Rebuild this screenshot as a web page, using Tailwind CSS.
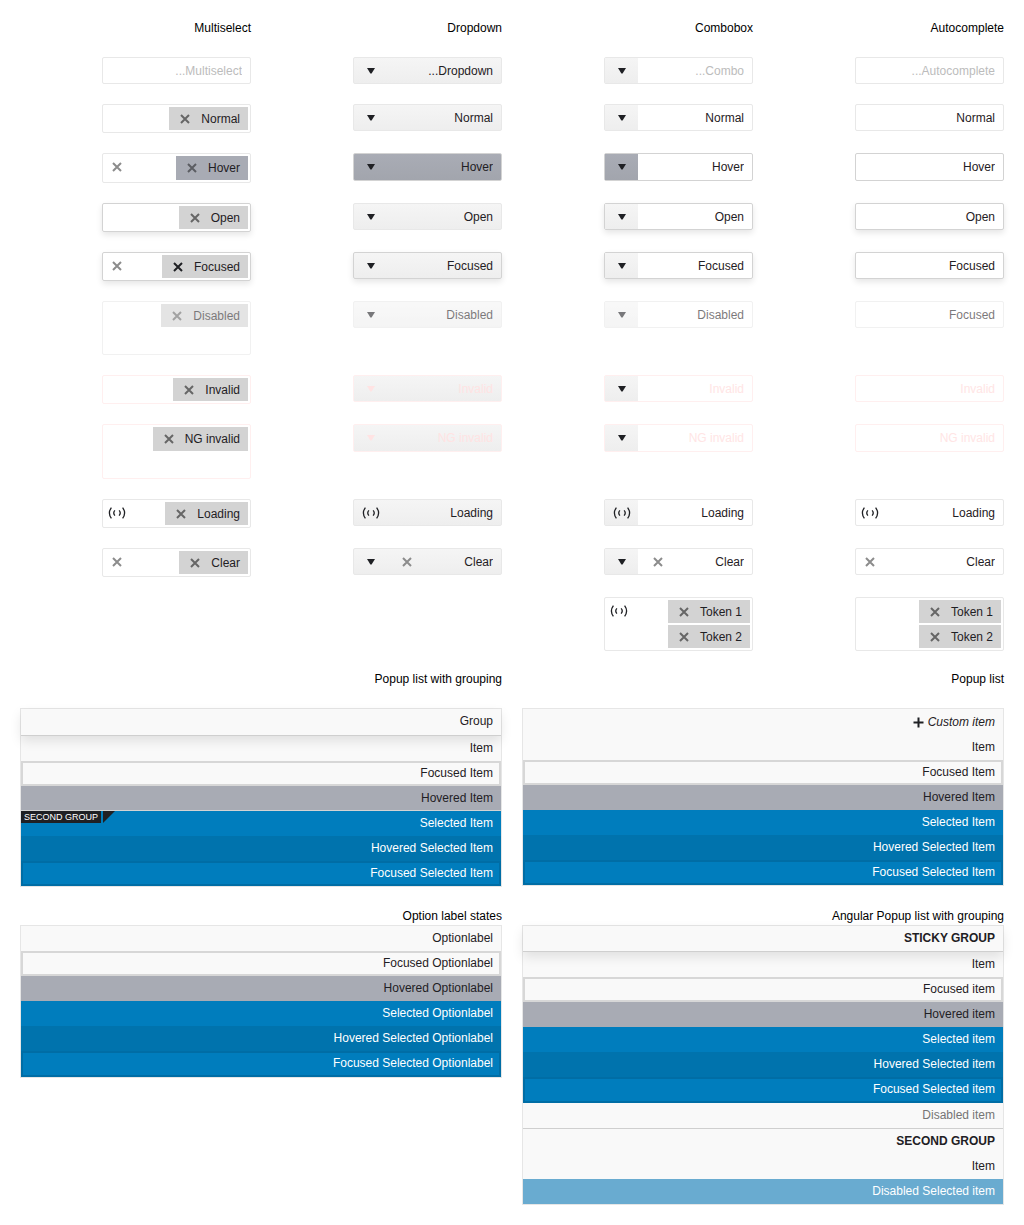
<!DOCTYPE html>
<html lang="en" dir="rtl">
<head>
<meta charset="utf-8">
<title>Select controls, right to left</title>
<script src="https://cdn.jsdelivr.net/npm/@tailwindcss/browser@4"></script>
</head>
<body class="bg-white p-5 font-['Liberation_Sans',Arial,sans-serif] text-xs text-[#1f2024]">

<svg class="hidden" aria-hidden="true">
  <symbol id="x" viewBox="0 0 10 10"><path d="M1 1l8 8M9 1l-8 8" fill="none" stroke="currentColor" stroke-width="2"/></symbol>
  <symbol id="arrow" viewBox="0 0 8 6"><path d="M0 0h8L4.6 5.6h-1.2z" fill="currentColor"/></symbol>
  <symbol id="load" viewBox="0 0 18 12"><path d="M3.4 .6Q-.6 6 3.4 11.4M14.6 .6Q18.6 6 14.6 11.4M6.9 3.4Q4.6 6 6.9 8.6M11.1 3.4Q13.4 6 11.1 8.6" fill="none" stroke="currentColor" stroke-width="1.3"/></symbol>
  <symbol id="plus" viewBox="0 0 11 11"><path d="M5.5 .5v10M.5 5.5h10" fill="none" stroke="currentColor" stroke-width="2"/></symbol>
</svg>

<main>
<section class="grid grid-cols-4 items-start gap-5">
  <h2 class="h-[17px] leading-[17px] text-black">Autocomplete</h2>
  <h2 class="h-[17px] leading-[17px] text-black">Combobox</h2>
  <h2 class="h-[17px] leading-[17px] text-black">Dropdown</h2>
  <h2 class="h-[17px] leading-[17px] text-black">Multiselect</h2>

  <!-- Placeholder -->
  <input aria-label="Autocomplete placeholder" placeholder="Autocomplete..." class="h-[27px] w-full max-w-[149px] rounded-xs border border-[#e8e8e8] bg-white px-2 placeholder:text-[#bcbcbc]">
  <div class="flex h-[27px] w-full max-w-[149px] rounded-xs border border-[#e8e8e8]">
    <input aria-label="Combobox placeholder" placeholder="Combo..." class="w-0 flex-1 px-2 placeholder:text-[#bcbcbc]">
    <button aria-label="Open" class="flex w-[33px] items-center justify-center bg-linear-to-b from-[#f5f5f5] to-[#eeeeee]"><svg class="h-[6px] w-2"><use href="#arrow"/></svg></button>
  </div>
  <div class="relative w-full max-w-[149px]">
    <select aria-label="Dropdown placeholder" class="block h-[27px] w-full appearance-none rounded-xs border border-[#e8e8e8] bg-linear-to-b from-[#f5f5f5] to-[#eeeeee] px-2"><option>Dropdown...</option></select>
    <span class="pointer-events-none absolute inset-y-0 left-0 flex w-[35px] items-center justify-center"><svg class="h-[6px] w-2"><use href="#arrow"/></svg></span>
  </div>
  <input aria-label="Multiselect placeholder" placeholder="Multiselect..." class="h-[27px] w-full max-w-[149px] rounded-xs border border-[#e8e8e8] bg-white px-2 placeholder:text-[#bcbcbc]">

  <!-- Normal -->
  <input aria-label="Autocomplete normal" value="Normal" class="h-[27px] w-full max-w-[149px] rounded-xs border border-[#e8e8e8] bg-white px-2">
  <div class="flex h-[27px] w-full max-w-[149px] rounded-xs border border-[#e8e8e8]">
    <input aria-label="Combobox normal" value="Normal" class="w-0 flex-1 px-2">
    <button aria-label="Open" class="flex w-[33px] items-center justify-center bg-linear-to-b from-[#f5f5f5] to-[#eeeeee]"><svg class="h-[6px] w-2"><use href="#arrow"/></svg></button>
  </div>
  <div class="relative w-full max-w-[149px]">
    <select aria-label="Dropdown normal" class="block h-[27px] w-full appearance-none rounded-xs border border-[#e8e8e8] bg-linear-to-b from-[#f5f5f5] to-[#eeeeee] px-2"><option>Normal</option></select>
    <span class="pointer-events-none absolute inset-y-0 left-0 flex w-[35px] items-center justify-center"><svg class="h-[6px] w-2"><use href="#arrow"/></svg></span>
  </div>
  <div class="flex w-full max-w-[149px] rounded-xs border border-[#e8e8e8] p-[2px]">
    <span class="flex h-[23px] items-center bg-[#d3d3d3] pr-2">Normal<button aria-label="Remove Normal" class="flex w-8 justify-center text-[#666]"><svg class="size-[10px]"><use href="#x"/></svg></button></span>
    <input aria-label="Multiselect normal" class="w-0 flex-1">
  </div>

  <!-- Hover -->
  <input aria-label="Autocomplete hover" value="Hover" class="h-[28px] w-full max-w-[149px] rounded-xs border border-[#d3d3d3] bg-white px-2">
  <div class="flex h-[28px] w-full max-w-[149px] rounded-xs border border-[#d3d3d3]">
    <input aria-label="Combobox hover" value="Hover" class="w-0 flex-1 px-2">
    <button aria-label="Open" class="flex w-[33px] items-center justify-center bg-linear-to-b from-[#a9acb5] to-[#a2a5ad]"><svg class="h-[6px] w-2"><use href="#arrow"/></svg></button>
  </div>
  <div class="relative w-full max-w-[149px]">
    <select aria-label="Dropdown hover" class="block h-[28px] w-full appearance-none rounded-xs border border-[#d3d3d3] bg-linear-to-b from-[#a9acb5] to-[#a2a5ad] px-2"><option>Hover</option></select>
    <span class="pointer-events-none absolute inset-y-0 left-0 flex w-[35px] items-center justify-center"><svg class="h-[6px] w-2"><use href="#arrow"/></svg></span>
  </div>
  <div class="flex w-full max-w-[149px] rounded-xs border border-[#e8e8e8]">
    <div class="flex flex-1 p-[2px] pl-0">
      <span class="flex h-[24px] items-center bg-[#a8abb4] pr-2">Hover<button aria-label="Remove Hover" class="flex w-8 justify-center text-[#5b5d62]"><svg class="size-[10px]"><use href="#x"/></svg></button></span>
      <input aria-label="Multiselect hover" class="w-0 flex-1">
    </div>
    <button aria-label="Clear" class="flex h-[26px] w-7 items-center justify-center text-[#8c8c8c]"><svg class="size-[10px]"><use href="#x"/></svg></button>
  </div>

  <!-- Open -->
  <input aria-label="Autocomplete open" value="Open" class="h-[27px] w-full max-w-[149px] rounded-xs border border-[#d3d3d3] bg-white px-2 shadow-[0_3px_6px_rgba(0,0,0,0.1)]">
  <div class="flex h-[27px] w-full max-w-[149px] rounded-xs border border-[#d3d3d3] shadow-[0_3px_6px_rgba(0,0,0,0.1)]">
    <input aria-label="Combobox open" value="Open" class="w-0 flex-1 px-2">
    <button aria-label="Close" class="flex w-[33px] items-center justify-center bg-linear-to-b from-[#f5f5f5] to-[#eeeeee]"><svg class="h-[6px] w-2"><use href="#arrow"/></svg></button>
  </div>
  <div class="relative w-full max-w-[149px]">
    <select aria-label="Dropdown open" class="block h-[27px] w-full appearance-none rounded-xs border border-[#e8e8e8] bg-linear-to-b from-[#f5f5f5] to-[#eeeeee] px-2"><option>Open</option></select>
    <span class="pointer-events-none absolute inset-y-0 left-0 flex w-[35px] items-center justify-center"><svg class="h-[6px] w-2"><use href="#arrow"/></svg></span>
  </div>
  <div class="flex w-full max-w-[149px] rounded-xs border border-[#d3d3d3] p-[2px] shadow-[0_3px_6px_rgba(0,0,0,0.1)]">
    <span class="flex h-[23px] items-center bg-[#d3d3d3] pr-2">Open<button aria-label="Remove Open" class="flex w-8 justify-center text-[#666]"><svg class="size-[10px]"><use href="#x"/></svg></button></span>
    <input aria-label="Multiselect open" class="w-0 flex-1">
  </div>

  <!-- Focused -->
  <input aria-label="Autocomplete focused" value="Focused" class="h-[27px] w-full max-w-[149px] rounded-xs border border-[#d3d3d3] bg-white px-2 shadow-[0_3px_6px_rgba(0,0,0,0.1)]">
  <div class="flex h-[27px] w-full max-w-[149px] rounded-xs border border-[#d3d3d3] shadow-[0_3px_6px_rgba(0,0,0,0.1)]">
    <input aria-label="Combobox focused" value="Focused" class="w-0 flex-1 px-2">
    <button aria-label="Open" class="flex w-[33px] items-center justify-center bg-linear-to-b from-[#f5f5f5] to-[#eeeeee]"><svg class="h-[6px] w-2"><use href="#arrow"/></svg></button>
  </div>
  <div class="relative w-full max-w-[149px]">
    <select aria-label="Dropdown focused" class="block h-[27px] w-full appearance-none rounded-xs border border-[#d3d3d3] bg-linear-to-b from-[#f5f5f5] to-[#eeeeee] px-2 shadow-[0_3px_6px_rgba(0,0,0,0.1)]"><option>Focused</option></select>
    <span class="pointer-events-none absolute inset-y-0 left-0 flex w-[35px] items-center justify-center"><svg class="h-[6px] w-2"><use href="#arrow"/></svg></span>
  </div>
  <div class="flex w-full max-w-[149px] rounded-xs border border-[#d3d3d3] shadow-[0_3px_6px_rgba(0,0,0,0.1)]">
    <div class="flex flex-1 p-[2px] pl-0">
      <span class="flex h-[23px] items-center bg-[#d3d3d3] pr-2">Focused<button aria-label="Remove Focused" class="flex w-8 justify-center"><svg class="size-[10px]"><use href="#x"/></svg></button></span>
      <input aria-label="Multiselect focused" class="w-0 flex-1">
    </div>
    <button aria-label="Clear" class="flex h-[25px] w-7 items-center justify-center text-[#8c8c8c]"><svg class="size-[10px]"><use href="#x"/></svg></button>
  </div>

  <!-- Disabled -->
  <input disabled aria-label="Autocomplete disabled" value="Focused" class="h-[27px] w-full max-w-[149px] rounded-xs border border-[#e8e8e8] bg-white px-2 opacity-60">
  <div class="flex h-[27px] w-full max-w-[149px] rounded-xs border border-[#e8e8e8] opacity-60">
    <input disabled aria-label="Combobox disabled" value="Disabled" class="w-0 flex-1 px-2">
    <button disabled aria-label="Open" class="flex w-[33px] items-center justify-center bg-linear-to-b from-[#f5f5f5] to-[#eeeeee]"><svg class="h-[6px] w-2"><use href="#arrow"/></svg></button>
  </div>
  <div class="relative w-full max-w-[149px] opacity-60">
    <select disabled aria-label="Dropdown disabled" class="block h-[27px] w-full appearance-none rounded-xs border border-[#e8e8e8] bg-linear-to-b from-[#f5f5f5] to-[#eeeeee] px-2 opacity-100"><option>Disabled</option></select>
    <span class="pointer-events-none absolute inset-y-0 left-0 flex w-[35px] items-center justify-center"><svg class="h-[6px] w-2"><use href="#arrow"/></svg></span>
  </div>
  <div class="flex h-[54px] w-full max-w-[149px] items-start rounded-xs border border-[#e8e8e8] p-[2px] opacity-60">
    <span class="flex h-[23px] items-center bg-[#d3d3d3] pr-2">Disabled<button disabled aria-label="Remove Disabled" class="flex w-8 justify-center text-[#666]"><svg class="size-[10px]"><use href="#x"/></svg></button></span>
    <input disabled aria-label="Multiselect disabled" class="w-0 flex-1">
  </div>

  <!-- Invalid -->
  <input aria-invalid="true" aria-label="Autocomplete invalid" value="Invalid" class="h-[27px] w-full max-w-[149px] rounded-xs border border-[#ffefef] bg-white px-2 text-[#ffe5e5]">
  <div class="flex h-[27px] w-full max-w-[149px] rounded-xs border border-[#ffefef]">
    <input aria-invalid="true" aria-label="Combobox invalid" value="Invalid" class="w-0 flex-1 px-2 text-[#ffe5e5]">
    <button aria-label="Open" class="flex w-[33px] items-center justify-center bg-linear-to-b from-[#f5f5f5] to-[#eeeeee]"><svg class="h-[6px] w-2"><use href="#arrow"/></svg></button>
  </div>
  <div class="relative w-full max-w-[149px] text-[#ffe3e3]">
    <select aria-invalid="true" aria-label="Dropdown invalid" class="block h-[27px] w-full appearance-none rounded-xs border border-[#ffefef] bg-linear-to-b from-[#f5f5f5] to-[#eeeeee] px-2"><option>Invalid</option></select>
    <span class="pointer-events-none absolute inset-y-0 left-0 flex w-[35px] items-center justify-center"><svg class="h-[6px] w-2"><use href="#arrow"/></svg></span>
  </div>
  <div class="flex w-full max-w-[149px] rounded-xs border border-[#ffefef] p-[2px]">
    <span class="flex h-[23px] items-center bg-[#d3d3d3] pr-2">Invalid<button aria-label="Remove Invalid" class="flex w-8 justify-center text-[#666]"><svg class="size-[10px]"><use href="#x"/></svg></button></span>
    <input aria-invalid="true" aria-label="Multiselect invalid" class="w-0 flex-1">
  </div>

  <!-- NG invalid -->
  <input aria-invalid="true" aria-label="Autocomplete NG invalid" value="NG invalid" class="h-[28px] w-full max-w-[149px] rounded-xs border border-[#ffefef] bg-white px-2 text-[#ffe5e5]">
  <div class="flex h-[28px] w-full max-w-[149px] rounded-xs border border-[#ffefef]">
    <input aria-invalid="true" aria-label="Combobox NG invalid" value="NG invalid" class="w-0 flex-1 px-2 text-[#ffe5e5]">
    <button aria-label="Open" class="flex w-[33px] items-center justify-center bg-linear-to-b from-[#f5f5f5] to-[#eeeeee]"><svg class="h-[6px] w-2"><use href="#arrow"/></svg></button>
  </div>
  <div class="relative w-full max-w-[149px] text-[#ffe3e3]">
    <select aria-invalid="true" aria-label="Dropdown NG invalid" class="block h-[28px] w-full appearance-none rounded-xs border border-[#ffefef] bg-linear-to-b from-[#f5f5f5] to-[#eeeeee] px-2"><option>NG invalid</option></select>
    <span class="pointer-events-none absolute inset-y-0 left-0 flex w-[35px] items-center justify-center"><svg class="h-[6px] w-2"><use href="#arrow"/></svg></span>
  </div>
  <div class="flex h-[55px] w-full max-w-[149px] items-start rounded-xs border border-[#ffefef] p-[2px]">
    <span class="flex h-[24px] items-center bg-[#d3d3d3] pr-2">NG invalid<button aria-label="Remove NG invalid" class="flex w-8 justify-center text-[#666]"><svg class="size-[10px]"><use href="#x"/></svg></button></span>
    <input aria-invalid="true" aria-label="Multiselect NG invalid" class="w-0 flex-1">
  </div>

  <!-- Loading -->
  <div class="flex h-[27px] w-full max-w-[149px] rounded-xs border border-[#e8e8e8]">
    <input aria-label="Autocomplete loading" value="Loading" class="w-0 flex-1 pr-2">
    <span class="flex w-7 items-center justify-center"><svg class="h-3 w-[18px]"><use href="#load"/></svg></span>
  </div>
  <div class="flex h-[27px] w-full max-w-[149px] rounded-xs border border-[#e8e8e8]">
    <input aria-label="Combobox loading" value="Loading" class="w-0 flex-1 px-2">
    <button aria-label="Loading" class="flex w-[33px] items-center justify-center bg-linear-to-b from-[#f5f5f5] to-[#eeeeee]"><svg class="h-3 w-[18px]"><use href="#load"/></svg></button>
  </div>
  <div class="relative w-full max-w-[149px]">
    <select aria-label="Dropdown loading" class="block h-[27px] w-full appearance-none rounded-xs border border-[#e8e8e8] bg-linear-to-b from-[#f5f5f5] to-[#eeeeee] px-2"><option>Loading</option></select>
    <span class="pointer-events-none absolute inset-y-0 left-0 flex w-[35px] items-center justify-center"><svg class="h-3 w-[18px]"><use href="#load"/></svg></span>
  </div>
  <div class="flex w-full max-w-[149px] rounded-xs border border-[#e8e8e8]">
    <div class="flex flex-1 p-[2px] pl-0">
      <span class="flex h-[23px] items-center bg-[#d3d3d3] pr-2">Loading<button aria-label="Remove Loading" class="flex w-8 justify-center text-[#666]"><svg class="size-[10px]"><use href="#x"/></svg></button></span>
      <input aria-label="Multiselect loading" class="w-0 flex-1">
    </div>
    <span class="flex h-[25px] w-7 items-center justify-center"><svg class="h-3 w-[18px]"><use href="#load"/></svg></span>
  </div>

  <!-- Clear -->
  <div class="flex h-[27px] w-full max-w-[149px] rounded-xs border border-[#e8e8e8]">
    <input aria-label="Autocomplete with clear button" value="Clear" class="w-0 flex-1 pr-2">
    <button aria-label="Clear" class="flex w-7 items-center justify-center text-[#8c8c8c]"><svg class="size-[10px]"><use href="#x"/></svg></button>
  </div>
  <div class="flex h-[27px] w-full max-w-[149px] rounded-xs border border-[#e8e8e8]">
    <input aria-label="Combobox with clear button" value="Clear" class="w-0 flex-1 pr-2">
    <button aria-label="Clear" class="flex w-10 items-center justify-center text-[#8c8c8c]"><svg class="size-[10px]"><use href="#x"/></svg></button>
    <button aria-label="Open" class="flex w-[33px] items-center justify-center bg-linear-to-b from-[#f5f5f5] to-[#eeeeee]"><svg class="h-[6px] w-2"><use href="#arrow"/></svg></button>
  </div>
  <div class="relative w-full max-w-[149px]">
    <select aria-label="Dropdown with clear button" class="block h-[27px] w-full appearance-none rounded-xs border border-[#e8e8e8] bg-linear-to-b from-[#f5f5f5] to-[#eeeeee] px-2"><option>Clear</option></select>
    <span class="pointer-events-none absolute inset-y-0 left-0 flex w-[35px] items-center justify-center"><svg class="h-[6px] w-2"><use href="#arrow"/></svg></span>
    <button aria-label="Clear" class="absolute inset-y-0 left-[34px] flex w-10 items-center justify-center text-[#8c8c8c]"><svg class="size-[10px]"><use href="#x"/></svg></button>
  </div>
  <div class="flex w-full max-w-[149px] rounded-xs border border-[#e8e8e8]">
    <div class="flex flex-1 p-[2px] pl-0">
      <span class="flex h-[23px] items-center bg-[#d3d3d3] pr-2">Clear<button aria-label="Remove Clear" class="flex w-8 justify-center text-[#666]"><svg class="size-[10px]"><use href="#x"/></svg></button></span>
      <input aria-label="Multiselect with clear button" class="w-0 flex-1">
    </div>
    <button aria-label="Clear" class="flex h-[25px] w-7 items-center justify-center text-[#8c8c8c]"><svg class="size-[10px]"><use href="#x"/></svg></button>
  </div>

  <!-- Tokens -->
  <div class="flex w-full max-w-[149px] flex-col items-start gap-[2px] rounded-xs border border-[#e8e8e8] p-[2px]">
    <span class="flex h-[23px] items-center bg-[#d3d3d3] pr-2">Token 1<button aria-label="Remove Token 1" class="flex w-8 justify-center text-[#666]"><svg class="size-[10px]"><use href="#x"/></svg></button></span>
    <span class="flex h-[23px] items-center bg-[#d3d3d3] pr-2">Token 2<button aria-label="Remove Token 2" class="flex w-8 justify-center text-[#666]"><svg class="size-[10px]"><use href="#x"/></svg></button></span>
  </div>
  <div class="flex w-full max-w-[149px] justify-between rounded-xs border border-[#e8e8e8]">
    <div class="flex flex-col items-start gap-[2px] p-[2px]">
      <span class="flex h-[23px] items-center bg-[#d3d3d3] pr-2">Token 1<button aria-label="Remove Token 1" class="flex w-8 justify-center text-[#666]"><svg class="size-[10px]"><use href="#x"/></svg></button></span>
      <span class="flex h-[23px] items-center bg-[#d3d3d3] pr-2">Token 2<button aria-label="Remove Token 2" class="flex w-8 justify-center text-[#666]"><svg class="size-[10px]"><use href="#x"/></svg></button></span>
    </div>
    <span class="flex h-[25px] w-7 items-center justify-center"><svg class="h-3 w-[18px]"><use href="#load"/></svg></span>
  </div>
</section>

<section class="mt-5 grid grid-cols-2 items-start gap-5">
  <div>
    <h2 id="popup" class="mb-5 h-[17px] leading-[17px] text-black">Popup list</h2>
    <ul role="listbox" aria-labelledby="popup" class="border border-[#e6e6e6] bg-[#f9f9f9] leading-[25px]">
      <li role="option" class="flex h-[26px] items-center gap-1 px-2 italic">Custom item<svg class="size-[11px]"><use href="#plus"/></svg></li>
      <li role="option" class="h-[25px] px-2">Item</li>
      <li role="option" class="h-[25px] px-2 inset-ring-2 inset-ring-[#d7d7d7]">Focused Item</li>
      <li role="option" class="h-[25px] bg-[#a8abb4] px-2">Hovered Item</li>
      <li role="option" aria-selected="true" class="h-[25px] bg-[#007dbd] px-2 text-white">Selected Item</li>
      <li role="option" aria-selected="true" class="h-[25px] bg-[#0073ad] px-2 text-white">Hovered Selected Item</li>
      <li role="option" aria-selected="true" class="h-[25px] bg-[#007dbd] px-2 text-white inset-ring-2 inset-ring-[#006da5]">Focused Selected Item</li>
    </ul>
  </div>
  <div>
    <h2 id="grouped" class="mb-5 h-[17px] leading-[17px] text-black">Popup list with grouping</h2>
    <ul role="listbox" aria-labelledby="grouped" class="border border-[#e6e6e6] bg-[#f9f9f9] leading-[25px]">
      <li role="presentation" class="h-[27px] border-b border-[#cfcfcf] px-2 shadow-[0_5px_12px_rgba(0,0,0,0.1)]">Group</li>
      <li role="option" class="h-[25px] px-2">Item</li>
      <li role="option" class="h-[25px] bg-[#f9f9f9] px-2 inset-ring-2 inset-ring-[#d7d7d7]">Focused Item</li>
      <li role="option" class="h-[24px] bg-[#a8abb4] px-2">Hovered Item</li>
      <li role="option" aria-selected="true" class="relative h-[26px] border-t border-[#d3d3d3] bg-[#007dbd] px-2 text-white">Selected Item
        <span class="absolute top-0 left-0 flex h-3 gap-[2px]"><svg class="size-3 text-[#1f2024]" viewBox="0 0 12 12"><path d="M0 0h12L0 12z" fill="currentColor"/></svg><span class="bg-[#1f2024] px-[3px] text-[9px] leading-3">SECOND GROUP</span></span>
      </li>
      <li role="option" aria-selected="true" class="h-[25px] bg-[#0073ad] px-2 text-white">Hovered Selected Item</li>
      <li role="option" aria-selected="true" class="h-[25px] bg-[#007dbd] px-2 text-white inset-ring-2 inset-ring-[#006da5]">Focused Selected Item</li>
    </ul>
  </div>

  <div>
    <h2 id="angular" class="h-[18px] leading-[18px] text-black">Angular Popup list with grouping</h2>
    <ul role="listbox" aria-labelledby="angular" class="border border-[#e6e6e6] bg-[#f9f9f9] leading-[25px]">
      <li role="presentation" class="h-[26px] border-b border-[#cfcfcf] px-2 font-bold shadow-[0_5px_12px_rgba(0,0,0,0.1)]">STICKY GROUP</li>
      <li role="option" class="h-[25px] px-2">Item</li>
      <li role="option" class="h-[25px] bg-[#f9f9f9] px-2 inset-ring-2 inset-ring-[#d7d7d7]">Focused item</li>
      <li role="option" class="h-[25px] bg-[#a8abb4] px-2">Hovered item</li>
      <li role="option" aria-selected="true" class="h-[25px] bg-[#007dbd] px-2 text-white">Selected item</li>
      <li role="option" aria-selected="true" class="h-[25px] bg-[#0073ad] px-2 text-white">Hovered Selected item</li>
      <li role="option" aria-selected="true" class="h-[26px] bg-[#007dbd] px-2 text-white inset-ring-2 inset-ring-[#006da5]">Focused Selected item</li>
      <li role="option" aria-disabled="true" class="h-[25px] px-2 text-[#757575]">Disabled item</li>
      <li role="presentation" class="h-[26px] border-t border-[#cfcfcf] px-2 font-bold">SECOND GROUP</li>
      <li role="option" class="h-[25px] px-2">Item</li>
      <li role="option" aria-disabled="true" aria-selected="true" class="h-[25px] bg-[#69abd0] px-2 text-white">Disabled Selected item</li>
    </ul>
  </div>
  <div>
    <h2 id="labels" class="h-[18px] leading-[18px] text-black">Option label states</h2>
    <ul role="listbox" aria-labelledby="labels" class="border border-[#e6e6e6] bg-[#f9f9f9] leading-[25px]">
      <li role="option" class="h-[25px] px-2">Optionlabel</li>
      <li role="option" class="h-[25px] px-2 inset-ring-2 inset-ring-[#d7d7d7]">Focused Optionlabel</li>
      <li role="option" class="h-[25px] bg-[#a8abb4] px-2">Hovered Optionlabel</li>
      <li role="option" aria-selected="true" class="h-[25px] bg-[#007dbd] px-2 text-white">Selected Optionlabel</li>
      <li role="option" aria-selected="true" class="h-[25px] bg-[#0073ad] px-2 text-white">Hovered Selected Optionlabel</li>
      <li role="option" aria-selected="true" class="h-[26px] bg-[#007dbd] px-2 text-white inset-ring-2 inset-ring-[#006da5]">Focused Selected Optionlabel</li>
    </ul>
  </div>
</section>
</main>
</body>
</html>
